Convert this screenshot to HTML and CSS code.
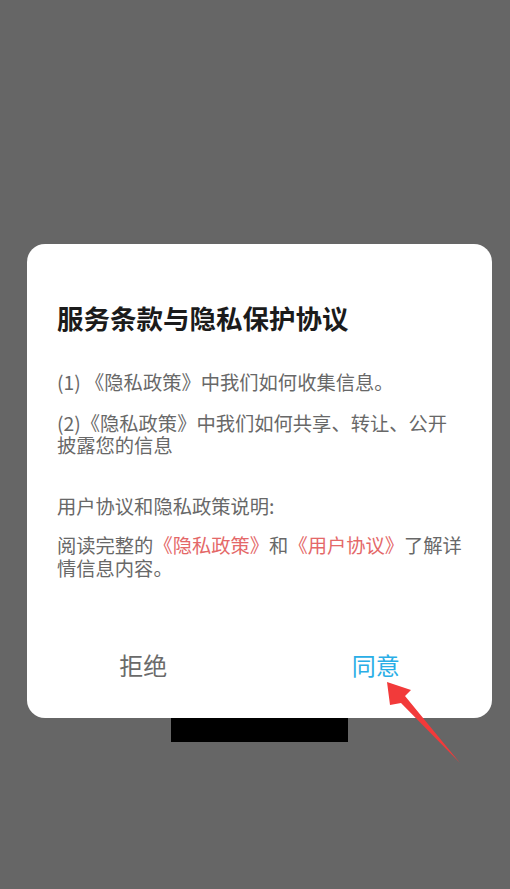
FILE: index.html
```html
<!DOCTYPE html>
<html lang="zh-CN">
<head>
<meta charset="utf-8">
<link rel="stylesheet" href="styles.css">
</head>
<body>
<div class="screen">
  <div class="dialog">
    <h1 class="title">服务条款与隐私保护协议</h1>
    <p class="para p1">(1) 《隐私政策》中我们如何收集信息。</p>
    <p class="para p2">(2)《隐私政策》中我们如何共享、转让、公开<br>披露您的信息</p>
    <p class="para p3">用户协议和隐私政策说明:</p>
    <p class="para p4">阅读完整的<span class="link">《隐私政策》</span>和<span class="link">《用户协议》</span>了解详<br>情信息内容。</p>
    <div class="actions">
      <div class="btn reject">拒绝</div>
      <div class="btn agree">同意</div>
    </div>
  </div>
  <div class="bar"></div>
  <svg class="arrow" width="100" height="100" viewBox="0 0 100 100" xmlns="http://www.w3.org/2000/svg">
    <path d="M7 2 L31 10 L25 16 L80 83 L21 23 L10 25 Z" fill="#f23a3a"/>
  </svg>
</div>
</body>
</html>
```
FILE: styles.css
```css
html, body {
  margin: 0;
  padding: 0;
}
body {
  background: #666666;
  font-family: "Noto Sans CJK SC", "Noto Sans", sans-serif;
}
.screen {
  position: relative;
  width: 510px;
  height: 889px;
  padding-top: 244px;
  box-sizing: border-box;
  overflow: hidden;
}
.dialog {
  margin-left: 27px;
  width: 465px;
  height: 474px;
  background: #ffffff;
  border-radius: 18px;
  box-sizing: border-box;
  padding: 56px 10px 0 30px;
  display: flex;
  flex-direction: column;
  position: relative;
  z-index: 1;
}
.title {
  margin: 0;
  font-size: 26.5px;
  line-height: 36px;
  font-weight: 700;
  color: #1b1b1b;
}
.para {
  margin: 0;
  font-size: 19.3px;
  line-height: 22.5px;
  color: #686868;
  white-space: nowrap;
}
.p1 { margin-top: 35px; }
.p2 { margin-top: 18px; }
.p3 { margin-top: 38px; }
.p4 { margin-top: 17px; }
.link { color: #e46868; }
.actions {
  margin-top: auto;
  margin-left: -30px;
  margin-right: -10px;
  height: 106px;
  display: flex;
  align-items: center;
}
.btn {
  flex: 1;
  text-align: center;
  font-size: 24px;
  line-height: 30px;
}
.reject { color: #6a6a6a; }
.agree { color: #2aaee6; }
.bar {
  margin-left: 171px;
  width: 177px;
  height: 24px;
  background: #000000;
}
.arrow {
  position: absolute;
  left: 380px;
  top: 680px;
  z-index: 2;
}
```
